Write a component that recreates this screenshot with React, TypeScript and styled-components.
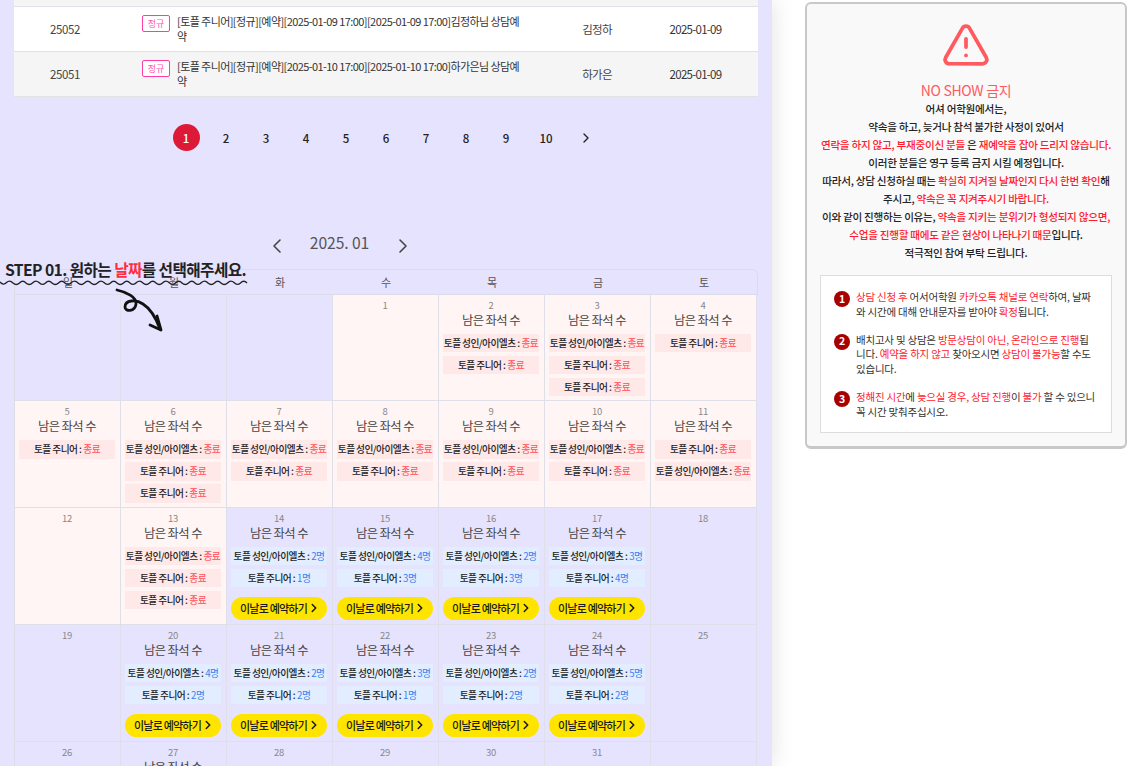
import React from "react";
import styled, { createGlobalStyle } from "styled-components";
import { TriangleAlert, ChevronLeft, ChevronRight } from "lucide-react";

const Global = createGlobalStyle`
  html, body { margin: 0; padding: 0; background: #fff; height: 100%; overflow: hidden; }
  * { box-sizing: border-box; }
  body { font-family: "Noto Sans CJK KR", "Noto Sans", sans-serif; color: #333; }
`;

const Page = styled.div`display:flex;align-items:flex-start;width:1128px;height:766px;overflow:hidden;background:#fff;`;
const Left = styled.main`position:relative;flex:none;width:772px;height:766px;padding:0 14px;background:#e6e3ff;box-shadow:0 0 22px rgba(0,0,0,.12);overflow:hidden;`;
const TableWrap = styled.section`width:744px;`;
const Stub = styled.div`height:7px;background:#f5f5f5;border-bottom:1px solid #e0dfea;`;
const Row = styled.div<{ $alt?: boolean }>`display:grid;grid-template-columns:102px 431px 100px 97px 14px;height:45px;background:${p => p.$alt ? "#f5f5f5" : "#fff"};border-bottom:1px solid #e2e2e2;font-size:11.5px;color:#444;letter-spacing:-.35px;align-items:center;`;
const Cell = styled.div`text-align:center;`;
const NameCell = styled.div`text-align:center;letter-spacing:-.7px;`;
const DateCell = styled.div`text-align:center;letter-spacing:-.72px;color:#333;`;
const TitleCell = styled.div`display:flex;align-items:flex-start;gap:7px;padding:7px 0 0 26px;height:100%;`;
const Badge = styled.span`flex:none;display:flex;align-items:center;justify-content:center;width:28px;height:17px;margin-top:1px;border:1px solid #ff3ea5;border-radius:2px;background:#fff;color:#ff55b0;font-size:9px;letter-spacing:0;`;
const Title = styled.div`width:347px;font-size:11px;line-height:15px;word-break:break-all;color:#333;letter-spacing:-.58px;`;
const Pager = styled.nav`display:flex;justify-content:center;gap:13px;margin-top:27px;`;
const PageItem = styled.span<{ $on?: boolean }>`display:flex;align-items:center;justify-content:center;width:27px;height:27px;border-radius:50%;font-size:11.5px;font-weight:500;color:${p => p.$on ? "#fff" : "#222"};background:${p => p.$on ? "#dc1a38" : "transparent"};`;
const MonthNav = styled.div`display:flex;justify-content:center;align-items:center;gap:16px;margin:79px 0 0 -93px;height:25px;color:#555;font-size:15.7px;font-weight:400;letter-spacing:-.1px;svg{color:#444;margin-top:6px;}`;
const MonthLabel = styled.span`width:70px;text-align:center;white-space:nowrap;`;
const Calendar = styled.section`width:744px;margin-top:14px;border:1px solid #dcdce8;border-bottom:0;border-right:0;border-top-right-radius:6px;border-top-left-radius:4px;`;
const Heads = styled.div`display:grid;grid-template-columns:repeat(7,106px);height:24.5px;border-bottom:1px solid #dcdce8;border-right:1px solid #dcdce8;border-top-right-radius:6px;`;
const Head = styled.div`display:flex;align-items:center;justify-content:center;font-size:11px;color:#555;`;
const Grid = styled.div`display:grid;grid-template-columns:repeat(7,106px);`;
const Day = styled.div<{ $past?: boolean }>`display:flex;flex-direction:column;align-items:center;padding:0 6px .5px 5px;background:${p => p.$past ? "#fff5f5" : "transparent"};border-right:1px solid #dfdfe9;border-bottom:1px solid #dfdfe9;`;
const DayNum = styled.div`height:19px;padding-top:3px;line-height:14px;font-size:9.5px;color:#888;letter-spacing:-.3px;`;
const Seats = styled.div`height:19.5px;line-height:15px;font-size:12.3px;color:#444;letter-spacing:-.55px;white-space:nowrap;margin-top:-1px;margin-bottom:1.5px;`;
const Pill = styled.div<{ $ended?: boolean }>`width:96px;height:18.5px;margin-bottom:3.5px;display:flex;align-items:center;justify-content:center;font-size:9.7px;font-weight:500;color:#222;letter-spacing:-.55px;white-space:nowrap;background:${p => p.$ended ? "#ffe8e8" : "#e2eeff"};`;
const PillValue = styled.span<{ $ended?: boolean }>`margin-left:2px;font-weight:400;color:${p => p.$ended ? "#ff4d55" : "#3b7ff0"};`;
const Book = styled.button`width:96px;height:23px;margin:6px 0 3.5px;padding:0 0 0 3px;border:0;border-radius:12px;background:#ffe400;display:flex;align-items:center;justify-content:center;gap:0;font-family:inherit;font-size:11px;font-weight:500;color:#1a1a1a;letter-spacing:-.8px;`;
const StepNote = styled.div`position:absolute;left:0;top:259px;width:250px;height:30px;`;
const StepText = styled.div`padding-left:5px;font-size:15.7px;font-weight:700;line-height:22px;letter-spacing:-.6px;color:#222;white-space:nowrap;`;
const Red = styled.span`color:#ff2d3f;`;
const Wave = styled.svg`position:absolute;left:0;top:19px;`;
const Arrow = styled.svg`position:absolute;left:112px;top:285px;`;

const Side = styled.aside`flex:none;width:322px;height:447px;margin:2px 0 0 33px;padding:16px 13px 0;border:2px solid #c8c8c8;border-bottom-width:3px;border-radius:6px;background:#f9f9f9;text-align:center;`;
const AlertIcon = styled.div`height:50px;display:flex;justify-content:center;color:#ff5a60;`;
const NoShow = styled.h2`margin:10px 0 0;font-size:14px;line-height:20px;font-weight:400;letter-spacing:-.3px;color:#ff5a60;`;
const Copy = styled.div`font-size:10.6px;line-height:18px;font-weight:500;color:#222;letter-spacing:-.27px;white-space:nowrap;`;
const Hot = styled.span`color:#ff1a2e;`;
const Notes = styled.ol`list-style:none;margin:13px 0 0;padding:14px 14px 0 13px;width:292px;height:158px;background:#fff;border:1px solid #ddd;text-align:left;`;
const Note = styled.li`display:flex;gap:6px;margin-bottom:13px;font-size:10.5px;line-height:14.8px;color:#333;letter-spacing:-.22px;word-break:break-all;`;
const Num = styled.span`flex:none;width:16px;height:16px;margin-top:1px;border-radius:50%;background:#a80000;color:#fff;font-size:10.5px;font-weight:700;display:flex;align-items:center;justify-content:center;`;
const Chev = styled(ChevronRight)`flex:none;`;

type P = { n: "a" | "j"; v?: string };
type D = { d?: number; past?: boolean; pills?: P[]; book?: boolean; seats?: boolean };
const a = (v?: string): P => ({ n: "a", v });
const j = (v?: string): P => ({ n: "j", v });
const ended = (d: number, pills: P[]): D => ({ d, past: true, pills, seats: true });
const open = (d: number, x: string, y: string): D => ({ d, pills: [a(x), j(y)], book: true, seats: true });
const days: D[] = [
  {}, {}, {}, { d: 1, past: true },
  ended(2, [a(), j()]), ended(3, [a(), j(), j()]), ended(4, [j()]),
  ended(5, [j()]), ended(6, [a(), j(), j()]), ended(7, [a(), j()]), ended(8, [a(), j()]), ended(9, [a(), j()]), ended(10, [a(), j()]), ended(11, [j(), a()]),
  { d: 12, past: true }, ended(13, [a(), j(), j()]), open(14, "2", "1"), open(15, "4", "3"), open(16, "2", "3"), open(17, "3", "4"), { d: 18 },
  { d: 19 }, open(20, "4", "2"), open(21, "2", "2"), open(22, "3", "1"), open(23, "2", "2"), open(24, "5", "2"), { d: 25 },
  { d: 26 }, open(27, "3", "2"), { d: 28 }, { d: 29 }, { d: 30 }, { d: 31 }, {},
];

const wave = (() => {
  let s = "M0 4";
  const step = 6.5;
  for (let i = 0; i * step < 246; i++) {
    const x = i * step;
    s += ` Q${x + step / 2} ${i % 2 === 0 ? 8 : 1.5} ${x + step} ${i % 5 === 0 ? 4.6 : 4.9}`;
  }
  return s;
})();

export default function App() {
  return (
    <Page>
      <Global />
      <Left>
        <TableWrap>
          <Stub />
          <Row>
            <Cell>25052</Cell>
            <TitleCell><Badge>정규</Badge><Title>[토플 주니어][정규][예약][2025-01-09 17:00][2025-01-09 17:00]김정하님 상담예약</Title></TitleCell>
            <NameCell>김정하</NameCell>
            <DateCell>2025-01-09</DateCell>
          </Row>
          <Row $alt>
            <Cell>25051</Cell>
            <TitleCell><Badge>정규</Badge><Title>[토플 주니어][정규][예약][2025-01-10 17:00][2025-01-10 17:00]하가은님 상담예약</Title></TitleCell>
            <NameCell>하가은</NameCell>
            <DateCell>2025-01-09</DateCell>
          </Row>
        </TableWrap>
        <Pager>
          {[1, 2, 3, 4, 5, 6, 7, 8, 9, 10].map(n => <PageItem key={n} $on={n === 1}>{n}</PageItem>)}
          <PageItem><ChevronRight size={16} strokeWidth={2} /></PageItem>
        </Pager>
        <MonthNav>
          <ChevronLeft size={24} strokeWidth={1.6} />
          <MonthLabel>2025. 01</MonthLabel>
          <ChevronRight size={24} strokeWidth={1.6} />
        </MonthNav>
        <Calendar>
          <Heads>{["일", "월", "화", "수", "목", "금", "토"].map(h => <Head key={h}>{h}</Head>)}</Heads>
          <Grid>
            {days.map((c, i) => (
              <Day key={i} $past={c.past}>
                {c.d && <DayNum>{c.d}</DayNum>}
                {c.seats && <Seats>남은 좌석 수</Seats>}
                {c.pills?.map((p, k) => (
                  <Pill key={k} $ended={!p.v}>
                    {p.n === "a" ? "토플 성인/아이엘츠 :" : "토플 주니어 :"}
                    <PillValue $ended={!p.v}>{p.v ? `${p.v}명` : "종료"}</PillValue>
                  </Pill>
                ))}
                {c.book && <Book>이날로 예약하기<Chev size={14} strokeWidth={2.6} /></Book>}
              </Day>
            ))}
          </Grid>
        </Calendar>
        <StepNote>
          <StepText>STEP 01. 원하는 <Red>날짜</Red>를 선택해주세요.</StepText>
          <Wave width="248" height="10" viewBox="0 0 248 10"><path d={wave} fill="none" stroke="#222" strokeWidth="1.4" /></Wave>
        </StepNote>
        <Arrow width="54" height="50" viewBox="0 0 54 50" fill="none" stroke="#111" strokeLinecap="round" strokeLinejoin="round">
          <path d="M5 5 C14 7 25 12 24 19 C23 27 13 27 13 22 C13 15 24 14 31 19 C39 24 44 33 48 44" strokeWidth="2.8" />
          <path d="M38 40 L49 45 L45 31" strokeWidth="2.8" />
        </Arrow>
      </Left>
      <Side>
        <AlertIcon><TriangleAlert size={50} strokeWidth={1.8} /></AlertIcon>
        <NoShow>NO SHOW 금지</NoShow>
        <Copy>
          어셔 어학원에서는,<br />
          약속을 하고, 늦거나 참석 불가한 사정이 있어서<br />
          <Hot>연락을 하지 않고, 부재중이신 분들</Hot> 은 <Hot>재예약을 잡아 드리지 않습니다.</Hot><br />
          이러한 분들은 영구 등록 금지 시킬 예정입니다.<br />
          따라서, 상담 신청하실 때는 <Hot>확실히 지켜질 날짜인지 다시 한번 확인</Hot>해<br />
          주시고, <Hot>약속은 꼭 지켜주시기 바랍니다.</Hot><br />
          이와 같이 진행하는 이유는, <Hot>약속을 지키는 분위기가 형성되지 않으면,</Hot><br />
          <Hot>수업을 진행할 때에도 같은 현상이 나타나기 때문</Hot>입니다.<br />
          적극적인 참여 부탁 드립니다.
        </Copy>
        <Notes>
          <Note><Num>1</Num><span><Hot>상담 신청 후</Hot> 어서어학원 <Hot>카카오톡 채널로 연락</Hot>하여, 날짜와 시간에 대해 안내문자를 받아야 <Hot>확정</Hot>됩니다.</span></Note>
          <Note><Num>2</Num><span>배치고사 및 상담은 <Hot>방문상담이 아닌, 온라인으로 진행</Hot>됩니다. <Hot>예약을 하지 않고</Hot> 찾아오시면 <Hot>상담이 불가능</Hot>할 수도 있습니다.</span></Note>
          <Note><Num>3</Num><span><Hot>정해진 시간</Hot>에 <Hot>늦으실 경우, 상담 진행</Hot>이 <Hot>불가</Hot> 할 수 있으니 꼭 시간 맞춰주십시오.</span></Note>
        </Notes>
      </Side>
    </Page>
  );
}
